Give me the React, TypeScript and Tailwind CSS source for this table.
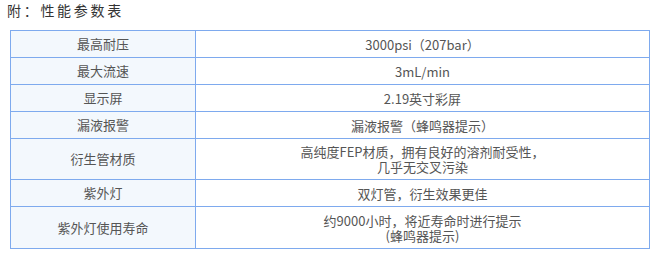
import React from "react";

const rows: { label: string; value: string[]; h: string }[] = [
  { label: "最高耐压", value: ["3000psi（207bar）"], h: "h-[27px]" },
  { label: "最大流速", value: ["3mL/min"], h: "h-[27px]" },
  { label: "显示屏", value: ["2.19英寸彩屏"], h: "h-[27px]" },
  { label: "漏液报警", value: ["漏液报警（蜂鸣器提示）"], h: "h-[27px]" },
  { label: "衍生管材质", value: ["高纯度FEP材质，拥有良好的溶剂耐受性，", "几乎无交叉污染"], h: "h-[41px]" },
  { label: "紫外灯", value: ["双灯管，衍生效果更佳"], h: "h-[27px]" },
  { label: "紫外灯使用寿命", value: ["约9000小时，将近寿命时进行提示", "(蜂鸣器提示)"], h: "h-[41px]" },
];

export default function App() {
  return (
    <div
      className="w-[664px] h-[254px] bg-white text-[#555]"
      style={{ fontFamily: '"Noto Sans CJK SC", "Microsoft YaHei", sans-serif' }}
    >
      <div className="pl-[7px] h-[20px] leading-[20px] text-[14px] tracking-[2.7px] text-[#333]">附：性能参数表</div>
      <div className="ml-[10px] mt-[10px] w-[640px] border border-[#7eaaee] text-[13px]">
        {rows.map((r, i) => (
          <div
            key={i}
            className={`flex box-border ${r.h} ${i < rows.length - 1 ? "border-b border-[#7eaaee]" : ""}`}
          >
            <div className="w-[185px] shrink-0 border-r border-[#7eaaee] bg-[#f3f8fd] flex items-center justify-center">
              {r.label}
            </div>
            <div className="flex-1 flex flex-col items-center justify-center leading-[15px]">
              {r.value.map((v, j) => (
                <div key={j}>{v}</div>
              ))}
            </div>
          </div>
        ))}
      </div>
    </div>
  );
}
